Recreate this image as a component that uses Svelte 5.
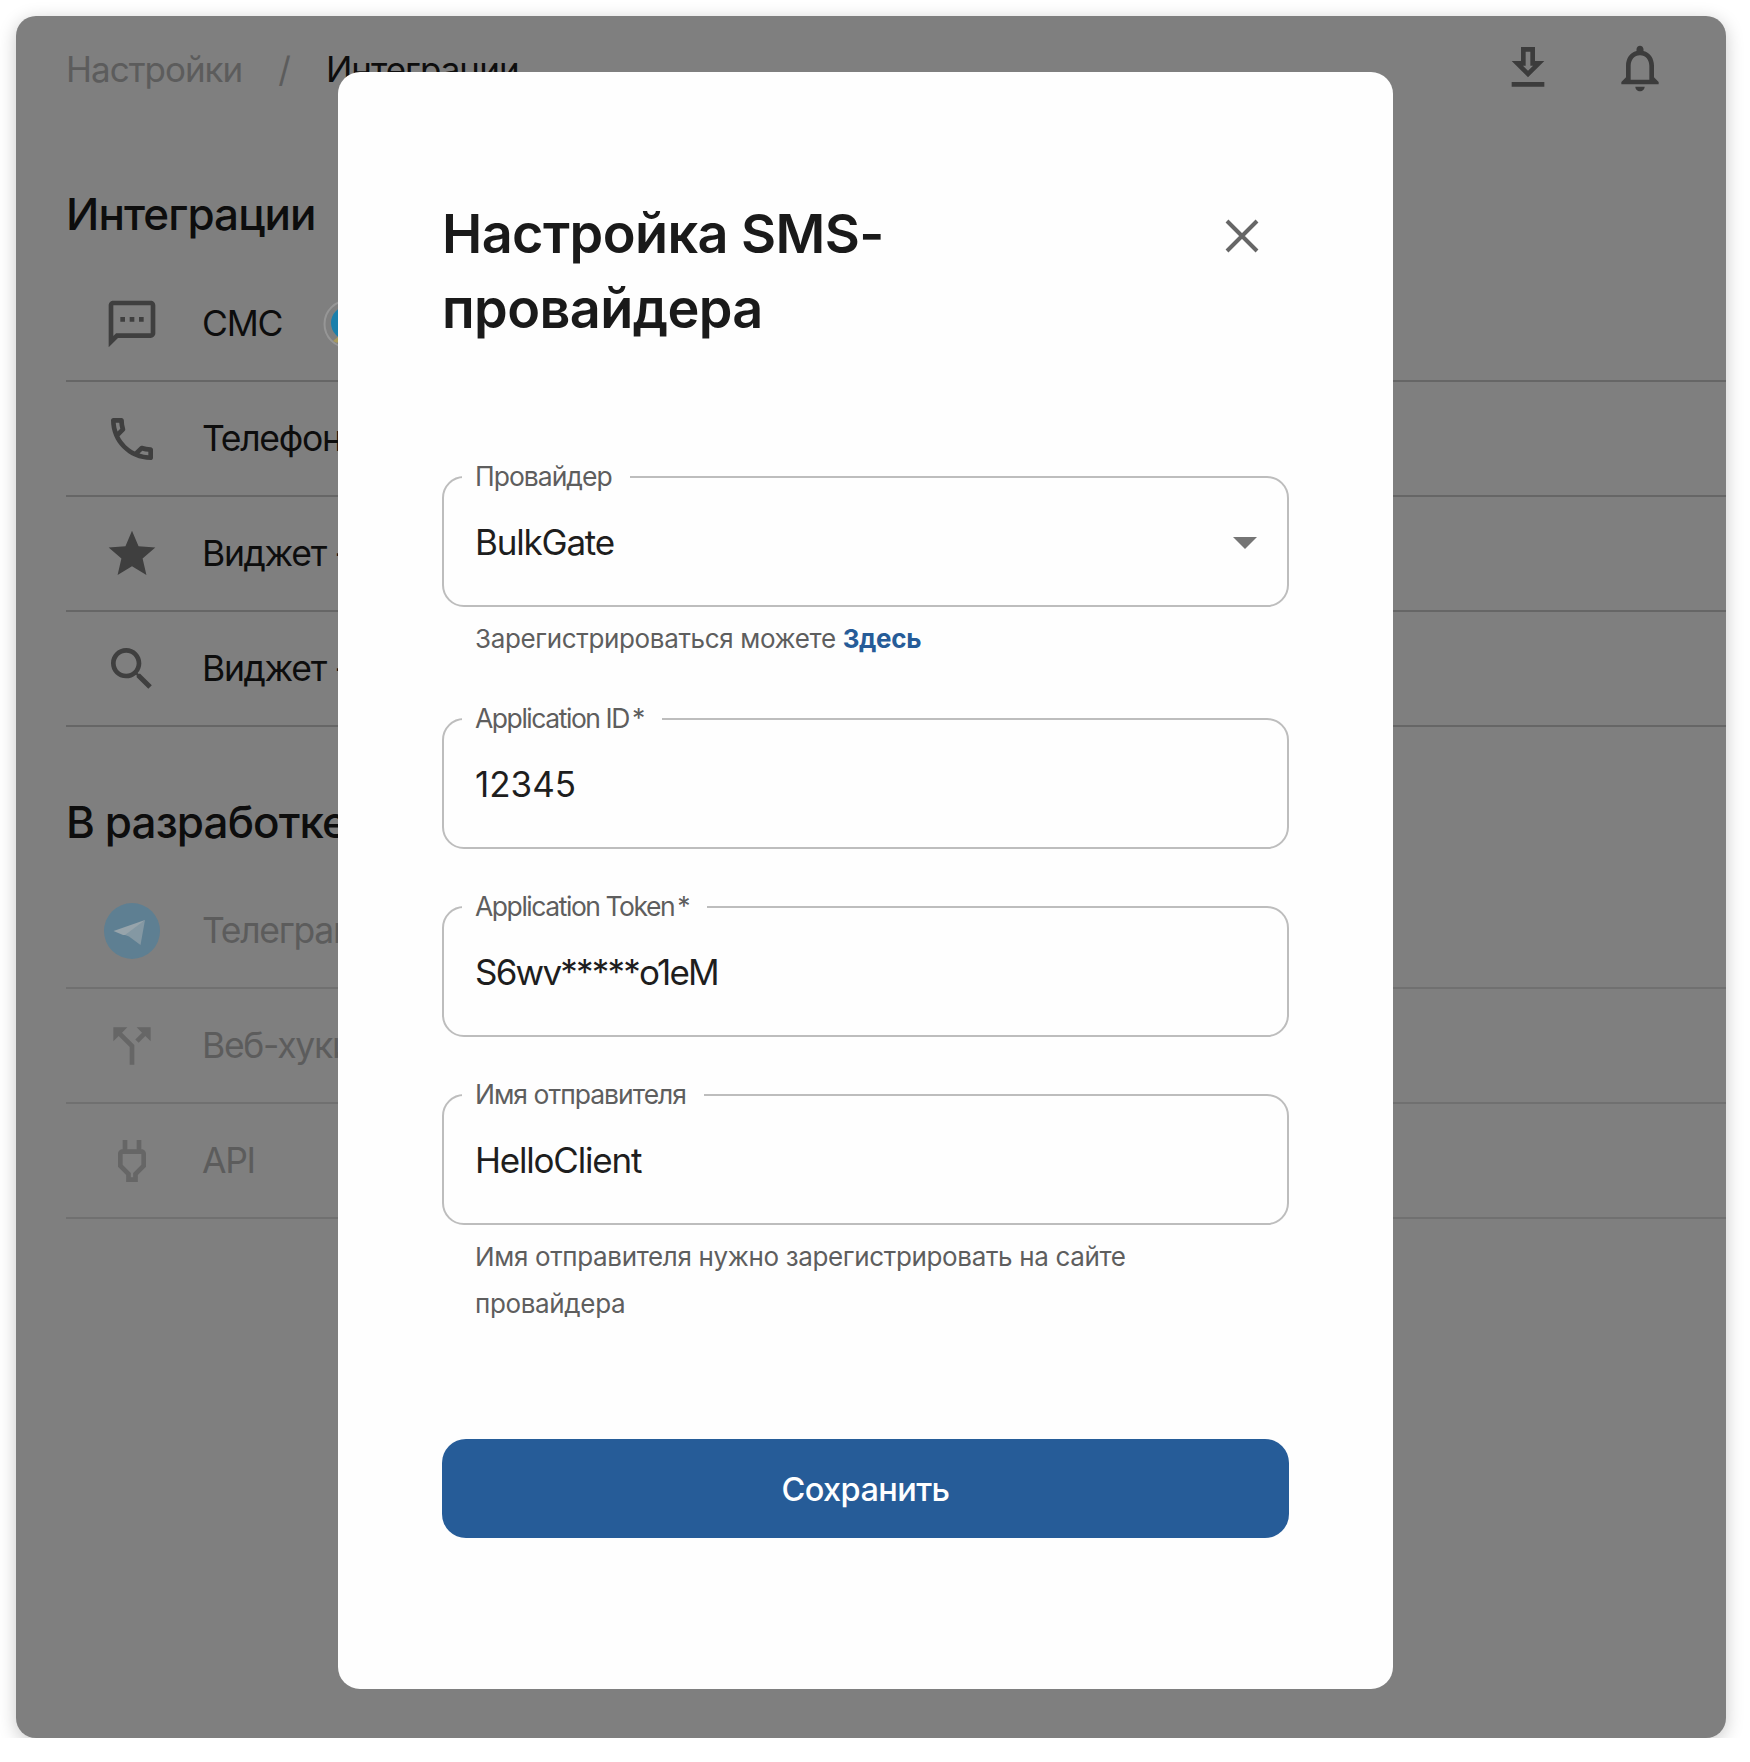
<script>
  const active = [
    { label: 'СМС', d: 'M20 2H4c-1.1 0-2 .9-2 2v18l4-4h14c1.1 0 2-.9 2-2V4c0-1.1-.9-2-2-2zm0 14H5.17L4 17.17V4h16v12zM7 9h2v2H7zm4 0h2v2h-2zm4 0h2v2h-2z', badge: true },
    { label: 'Телефония', d: 'M6.54 5c.06.89.21 1.76.45 2.59l-1.2 1.2c-.41-1.2-.67-2.47-.76-3.79h1.51m9.86 12.02c.85.24 1.72.39 2.6.45v1.49c-1.32-.09-2.59-.35-3.8-.75l1.2-1.19M7.5 3H4c-.55 0-1 .45-1 1 0 9.39 7.61 17 17 17 .55 0 1-.45 1-1v-3.49c0-.55-.45-1-1-1-1.24 0-2.45-.2-3.57-.57-.1-.04-.21-.05-.31-.05-.26 0-.51.1-.71.29l-2.2 2.2c-2.83-1.45-5.15-3.76-6.59-6.59l2.2-2.2c.28-.28.36-.67.25-1.02C8.7 6.45 8.5 5.25 8.5 4c0-.55-.45-1-1-1z' },
    { label: 'Виджет - отзывы', d: 'M12 17.27L18.18 21l-1.64-7.03L22 9.24l-7.19-.61L12 2 9.19 8.63 2 9.24l5.46 4.73L5.82 21z' },
    { label: 'Виджет - поиск', d: 'M15.5 14h-.79l-.28-.27C15.41 12.59 16 11.11 16 9.5 16 5.91 13.09 3 9.5 3S3 5.91 3 9.5 5.91 16 9.5 16c1.61 0 3.09-.59 4.23-1.57l.27.28v.79l5 4.99L20.49 19l-4.99-5zm-6 0C7.01 14 5 11.99 5 9.5S7.01 5 9.5 5 14 7.01 14 9.5 11.99 14 9.5 14z' }
  ];
  const planned = [
    { label: 'Телеграм', telegram: true },
    { label: 'Веб-хуки', d: 'M14 4l2.29 2.29-2.88 2.88 1.42 1.42 2.88-2.88L20 10V4zm-4 0H4v6l2.29-2.29 4.71 4.7V20h2v-8.41l-5.29-5.3z' },
    { label: 'API', d: 'M16 7V3h-2v4h-4V3H8v4h-.01C6.9 7 6 7.9 6 8.99v5.49L9.5 18v3h5v-3l3.5-3.52V9c0-1.1-.9-2-2-2zm0 6.66l-3.5 3.51V19h-1v-1.83L8 13.65V9h8v4.66z' }
  ];
</script>

<main class="window">
  <header class="topbar">
    <nav class="crumbs">
      <span class="muted">Настройки</span>
      <span class="muted slash">/</span>
      <span>Интеграции</span>
    </nav>
    <div class="actions">
      <svg viewBox="0 0 24 24"><path d="M19 9h-4V3H9v6H5l7 7 7-7zm-8 2V5h2v6h1.17L12 13.17 9.83 11H11zm-6 7h14v2H5z" /></svg>
      <svg viewBox="0 0 24 24"><path d="M12 22c1.1 0 2-.9 2-2h-4c0 1.1.9 2 2 2zm6-6v-5c0-3.07-1.63-5.64-4.5-6.32V4c0-.83-.67-1.5-1.5-1.5s-1.5.67-1.5 1.5v.68C7.64 5.36 6 7.92 6 11v5l-2 2v1h16v-1l-2-2zm-2 1H8v-6c0-2.48 1.51-4.5 4-4.5s4 2.02 4 4.5v6z" /></svg>
    </div>
  </header>

  <section class="group first">
    <h2>Интеграции</h2>
    {#each active as row}
      <div class="row">
        <svg class="icon" viewBox="0 0 24 24"><path d={row.d} /></svg>
        <span>{row.label}</span>
        {#if row.badge}
          <svg class="badge" viewBox="0 0 50 50">
            <circle cx="25" cy="25" r="23.5" fill="none" stroke="#969696" stroke-width="2" />
            <circle cx="25" cy="24" r="17" fill="#1b7fab" />
            <path d="M10 42l6-5 3 2-5 5z" fill="#a89a5c" />
          </svg>
        {/if}
      </div>
    {/each}
  </section>

  <section class="group second">
    <h2>В разработке</h2>
    {#each planned as row}
      <div class="row dim">
        {#if row.telegram}
          <svg class="icon" viewBox="0 0 56 56">
            <circle cx="28" cy="28" r="28" fill="#5e7f92" />
            <path d="M9.5 28L41 17 25 32 19 32z" fill="#97a4ab" />
            <path d="M41 17l-4.5 25L25 33.5 21 32z" fill="#8498a3" />
          </svg>
        {:else}
          <svg class="icon" viewBox="0 0 24 24"><path d={row.d} /></svg>
        {/if}
        <span>{row.label}</span>
      </div>
    {/each}
  </section>

  <form class="modal">
    <div class="modal-head">
      <h1>Настройка SMS-<br />провайдера</h1>
      <svg class="close" viewBox="0 0 34 34"><path d="M2 2l30 30M32 2L2 32" /></svg>
    </div>

    <div class="field">
      <label for="provider">Провайдер</label>
      <div class="value" id="provider">BulkGate</div>
      <span class="caret"></span>
    </div>
    <p class="hint">Зарегистрироваться можете <a href="#here">Здесь</a></p>

    <div class="field spaced">
      <label class="latin" for="app-id">Application ID<span class="req">*</span></label>
      <div class="value digits" id="app-id">12345</div>
    </div>

    <div class="field spaced">
      <label class="latin" for="token">Application Token<span class="req">*</span></label>
      <div class="value token" id="token">S6wv*****o1eM</div>
    </div>

    <div class="field spaced">
      <label for="sender">Имя отправителя</label>
      <div class="value" id="sender">HelloClient</div>
    </div>
    <p class="hint">Имя отправителя нужно зарегистрировать на сайте<br />провайдера</p>

    <button type="button">Сохранить</button>
  </form>
</main>

<style>
  :global(body) {
    margin: 0;
    background: #fff;
  }

  .window {
    position: relative;
    box-sizing: border-box;
    width: 1710px;
    height: 1722px;
    margin: 16px 0 0 16px;
    padding-left: 50px;
    background: #7f7f7f;
    border-radius: 20px;
    box-shadow: 0 4px 18px rgba(0, 0, 0, 0.22);
    font-family: Inter, "Noto Sans", sans-serif;
    color: #0d0d0d;
    overflow: hidden;
  }

  .topbar {
    display: flex;
    justify-content: space-between;
    align-items: center;
    height: 104px;
    padding-right: 58px;
    font-size: 35px;
    letter-spacing: -1px;
  }

  .crumbs {
    display: flex;
    gap: 36px;
    padding-top: 1px;
  }

  .muted {
    color: #5c5c5c;
  }

  .actions {
    display: flex;
    gap: 56px;
  }

  .actions svg {
    width: 56px;
    height: 56px;
    fill: #3c3c3c;
  }

  .group.first {
    padding-top: 67px;
  }

  .group.second {
    padding-top: 68px;
  }

  h2 {
    margin: 0 0 25px;
    height: 55px;
    font-size: 44px;
    line-height: 55px;
    font-weight: 500;
    letter-spacing: -0.9px;
  }

  .second h2 {
    margin-bottom: 24px;
  }

  .row {
    display: flex;
    align-items: center;
    box-sizing: border-box;
    height: 115px;
    padding-left: 38px;
    border-bottom: 2px solid #666;
    font-size: 35.5px;
    letter-spacing: -1.3px;
  }

  .row.dim {
    color: #5c5c5c;
    border-bottom-color: #707070;
  }

  .icon {
    flex: none;
    width: 56px;
    height: 56px;
    margin-right: 42px;
    fill: #3f3f3f;
  }

  .dim .icon {
    fill: #666;
  }

  .badge {
    width: 50px;
    height: 50px;
    margin-left: 41px;
  }

  .modal {
    position: absolute;
    left: 322px;
    top: 56px;
    box-sizing: border-box;
    width: 1055px;
    height: 1617px;
    padding: 0 104px;
    background: #fefefe;
    border-radius: 22px;
  }

  .modal-head {
    display: flex;
    justify-content: space-between;
    align-items: flex-start;
    height: 404px;
    padding: 124px 30px 0 0;
    box-sizing: border-box;
  }

  h1 {
    margin: 0;
    font-size: 54px;
    line-height: 75px;
    font-weight: 600;
    letter-spacing: -0.6px;
    color: #1a1a1a;
  }

  .close {
    width: 34px;
    height: 34px;
    margin-top: 23px;
    fill: none;
    stroke: #666;
    stroke-width: 4;
  }

  .field {
    position: relative;
    box-sizing: border-box;
    height: 131px;
    padding: 0 31px;
    border: 2px solid #bdbdbd;
    border-radius: 22px;
  }

  .field.spaced {
    margin-top: 57px;
  }

  .hint + .field.spaced {
    margin-top: 56px;
  }

  label {
    position: absolute;
    left: 18px;
    top: -18px;
    padding: 0 18px 0 13px;
    background: #fefefe;
    font-size: 26.5px;
    line-height: 32px;
    color: #5e5e5e;
    letter-spacing: -1px;
  }

  label.latin {
    letter-spacing: -1.45px;
  }

  .req {
    margin-left: 3px;
  }

  .value {
    padding-top: 42px;
    font-size: 35px;
    line-height: 44px;
    letter-spacing: -1.2px;
    color: #1e1e1e;
  }

  .value.digits {
    letter-spacing: 0;
  }

  .value.token {
    letter-spacing: -1.8px;
  }

  .caret {
    position: absolute;
    right: 30px;
    top: 59px;
    border-left: 12px solid transparent;
    border-right: 12px solid transparent;
    border-top: 12px solid #757575;
  }

  .hint {
    margin: 8px 0 0;
    padding-left: 33px;
    font-size: 26px;
    line-height: 47px;
    letter-spacing: -0.35px;
    color: #5e5e5e;
  }

  .hint a {
    color: #265c98;
    font-weight: 700;
    text-decoration: none;
  }

  button {
    display: block;
    width: 100%;
    height: 99px;
    margin-top: 112px;
    padding: 2px 0 0;
    border: 0;
    border-radius: 24px;
    background: #265c98;
    color: #fff;
    font: 500 32.5px Inter, "Noto Sans", sans-serif;
    letter-spacing: -0.6px;
  }
</style>
